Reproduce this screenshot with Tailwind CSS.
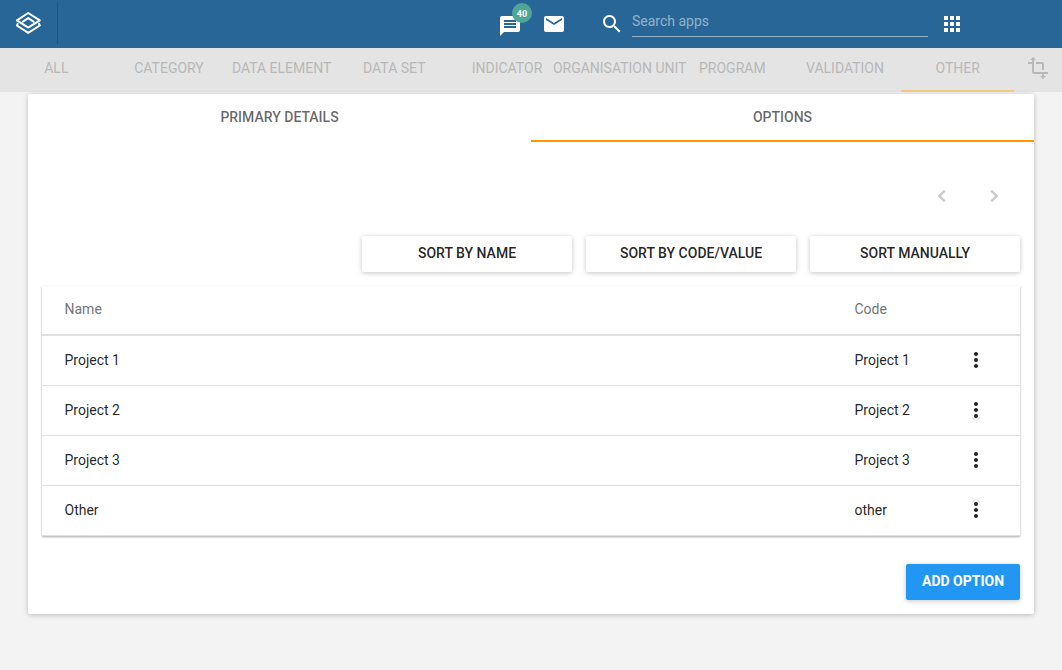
<!DOCTYPE html>
<html lang="en">
<head>
<meta charset="utf-8">
<title>Maintenance</title>
<script src="https://cdn.jsdelivr.net/npm/@tailwindcss/browser@4"></script>
</head>
<body class="h-[670px] overflow-hidden bg-[#f3f3f3] font-[Roboto,sans-serif] text-sm text-black/87">
<header class="flex h-12 bg-[#276696] text-white">
  <div class="flex h-[42px] w-[58px] mt-0.5 border-r border-[#20557f] pl-4 pt-[9px]">
    <svg class="h-6 w-[26px]" viewBox="0 0 26 24" fill="none" stroke="#fff" stroke-width="2" stroke-linejoin="round" stroke-linecap="round"><path d="M12.2 2 23.8 9.3 12.2 16.6.9 9.3z"/><path d="M6.9 10.6 12.2 7.1 17.5 10.6"/><path d="M1.6 12.8.9 14.5 12.2 21.8 23.8 14.5 23.1 12.8"/></svg>
  </div>
  <div class="relative ml-[440px] mt-3.5 h-6 w-6">
    <svg class="size-6" viewBox="0 0 24 24" fill="currentColor"><path d="M20 2H4c-1.100 0-1.990.900-1.990 2L2 22l4-4h14c1.100 0 2-.900 2-2V4c0-1.100-.900-2-2-2zm-2 12H6v-2h12v2zm0-3H6V9h12v2zm0-3H6V6h12v2z"/></svg>
    <span class="absolute -top-[11px] left-3.5 flex size-5 items-center justify-center rounded-full bg-[#4ca797] pt-0.5 text-[9px] font-bold">40</span>
  </div>
  <svg class="ml-5 mt-3 size-6" viewBox="0 0 24 24" fill="currentColor"><path d="M20 4H4c-1.100 0-1.990.900-1.990 2L2 18c0 1.100.900 2 2 2h16c1.100 0 2-.900 2-2V6c0-1.100-.900-2-2-2zm0 4l-8 5-8-5V6l8 5 8-5v2z"/></svg>
  <svg class="ml-[34px] mt-3 size-6" viewBox="0 0 24 24" fill="currentColor"><path d="M15.500 14h-.790l-.280-.270C15.410 12.590 16 11.110 16 9.500 16 5.910 13.090 3 9.500 3S3 5.910 3 9.500 5.910 16 9.500 16c1.610 0 3.090-.590 4.230-1.570l.270.280v.790l5 4.990L20.490 19l-4.990-5zm-6 0C7.010 14 5 11.990 5 9.500S7.010 5 9.500 5 14 7.010 14 9.500 11.990 14 9.500 14z"/></svg>
  <div class="ml-2 h-[37px] w-[296px] border-b border-white/50 pt-[11px] leading-5 text-white/50">Search apps</div>
  <svg class="ml-3 mt-3 size-6" viewBox="0 0 24 24" fill="currentColor"><path d="M4 8h4V4H4v4zm6 12h4v-4h-4v4zm-6 0h4v-4H4v4zm0-6h4v-4H4v4zm6 0h4v-4h-4v4zm6-10v4h4V4h-4zm-6 4h4V4h-4v4zm6 6h4v-4h-4v4zm0 6h4v-4h-4v4z"/></svg>
</header>
<nav class="flex h-11 bg-[#e4e4e4] text-[#b8b8b8]">
  <div class="grid w-[1014px] grid-cols-9 whitespace-nowrap leading-[41px]">
    <span class="flex justify-center">ALL</span>
    <span class="flex justify-center">CATEGORY</span>
    <span class="flex justify-center">DATA ELEMENT</span>
    <span class="flex justify-center">DATA SET</span>
    <span class="flex justify-center">INDICATOR</span>
    <span class="flex justify-center">ORGANISATION UNIT</span>
    <span class="flex justify-center">PROGRAM</span>
    <span class="flex justify-center">VALIDATION</span>
    <span class="flex justify-center border-b-2 border-[#f1c985]">OTHER</span>
  </div>
  <svg class="ml-3 mt-2 size-6" viewBox="0 0 24 24" fill="currentColor"><path d="M22 18v-2H8V4h2L7 1 4 4h2v2H2v2h4v8c0 1.100.900 2 2 2h8v2h-2l3 3 3-3h-2v-2h4zM10 8h6v6h2V8c0-1.100-.900-2-2-2h-6v2z"/></svg>
</nav>
<main class="mx-7 mt-0.5 h-[520px] rounded-[2px] bg-white shadow-[0_1px_6px_rgba(0,0,0,0.12),0_1px_4px_rgba(0,0,0,0.12)]">
  <div class="mb-px grid h-12 grid-cols-2 text-center font-medium leading-[46px] text-black/60">
    <div>PRIMARY DETAILS</div>
    <div class="h-12 border-b-2 border-[#ff9800]">OPTIONS</div>
  </div>
  <div class="flex h-[93px] justify-end gap-7 pr-7 pt-[41px] text-black/20">
    <svg class="size-6" viewBox="0 0 24 24" fill="currentColor" stroke="currentColor" stroke-width="0.4"><path d="M15.410 7.410L14 6l-6 6 6 6 1.410-1.410L10.830 12z"/></svg>
    <svg class="size-6" viewBox="0 0 24 24" fill="currentColor" stroke="currentColor" stroke-width="0.4"><path d="M10 6L8.590 7.410 13.170 12l-4.580 4.590L10 18l6-6z"/></svg>
  </div>
  <div class="flex justify-end gap-3.5 pr-3.5 text-center font-medium leading-[35px]">
    <div class="h-9 w-[210px] rounded-[2px] bg-white shadow-[0_1px_6px_rgba(0,0,0,0.12),0_1px_4px_rgba(0,0,0,0.12)]">SORT BY NAME</div>
    <div class="h-9 w-[210px] rounded-[2px] bg-white shadow-[0_1px_6px_rgba(0,0,0,0.12),0_1px_4px_rgba(0,0,0,0.12)]">SORT BY CODE/VALUE</div>
    <div class="h-9 w-[210px] rounded-[2px] bg-white shadow-[0_1px_6px_rgba(0,0,0,0.12),0_1px_4px_rgba(0,0,0,0.12)]">SORT MANUALLY</div>
  </div>
  <div class="mx-3.5 mt-3.5 h-[250px] bg-white shadow-[0_1px_2px_rgba(0,0,0,0.35)]">
    <div class="flex h-[50px] border-b-2 border-[#e0e0e0] pl-[22.5px] leading-[46px] text-[#757575]"><span class="w-[790px]">Name</span><span>Code</span></div>
    <div class="flex h-[50px] border-b border-[#e0e0e0] pl-[22.5px] leading-[48px]"><span class="w-[790px]">Project 1</span><span class="w-[109.5px]">Project 1</span><svg class="mt-3 size-6" viewBox="0 0 24 24" fill="currentColor"><path d="M12 8c1.100 0 2-.900 2-2s-.900-2-2-2-2 .900-2 2 .900 2 2 2zm0 2c-1.100 0-2 .900-2 2s.900 2 2 2 2-.900 2-2-.900-2-2-2zm0 6c-1.100 0-2 .900-2 2s.900 2 2 2 2-.900 2-2-.900-2-2-2z"/></svg></div>
    <div class="flex h-[50px] border-b border-[#e0e0e0] pl-[22.5px] leading-[48px]"><span class="w-[790px]">Project 2</span><span class="w-[109.5px]">Project 2</span><svg class="mt-3 size-6" viewBox="0 0 24 24" fill="currentColor"><path d="M12 8c1.100 0 2-.900 2-2s-.900-2-2-2-2 .900-2 2 .900 2 2 2zm0 2c-1.100 0-2 .900-2 2s.900 2 2 2 2-.900 2-2-.900-2-2-2zm0 6c-1.100 0-2 .900-2 2s.900 2 2 2 2-.900 2-2-.900-2-2-2z"/></svg></div>
    <div class="flex h-[50px] border-b border-[#e0e0e0] pl-[22.5px] leading-[48px]"><span class="w-[790px]">Project 3</span><span class="w-[109.5px]">Project 3</span><svg class="mt-3 size-6" viewBox="0 0 24 24" fill="currentColor"><path d="M12 8c1.100 0 2-.900 2-2s-.900-2-2-2-2 .900-2 2 .900 2 2 2zm0 2c-1.100 0-2 .900-2 2s.900 2 2 2 2-.900 2-2-.900-2-2-2zm0 6c-1.100 0-2 .900-2 2s.900 2 2 2 2-.900 2-2-.900-2-2-2z"/></svg></div>
    <div class="flex h-[50px] border-b border-[#e0e0e0] pl-[22.5px] leading-[48px]"><span class="w-[790px]">Other</span><span class="w-[109.5px]">other</span><svg class="mt-3 size-6" viewBox="0 0 24 24" fill="currentColor"><path d="M12 8c1.100 0 2-.900 2-2s-.900-2-2-2-2 .900-2 2 .900 2 2 2zm0 2c-1.100 0-2 .900-2 2s.900 2 2 2 2-.900 2-2-.900-2-2-2zm0 6c-1.100 0-2 .900-2 2s.900 2 2 2 2-.900 2-2-.900-2-2-2z"/></svg></div>
  </div>
  <div class="mt-7 flex justify-end pr-3.5">
    <div class="h-9 w-[114px] rounded-[2px] bg-[#2196f3] text-center font-bold leading-[35px] text-white shadow-[0_1px_6px_rgba(0,0,0,0.12),0_1px_4px_rgba(0,0,0,0.12)]">ADD OPTION</div>
  </div>
</main>
</body>
</html>
